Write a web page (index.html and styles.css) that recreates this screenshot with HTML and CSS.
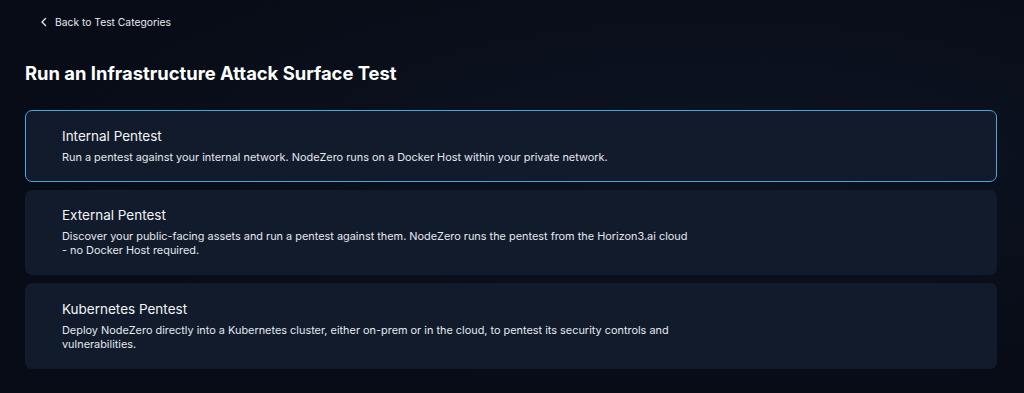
FILE: index.html
```html
<!DOCTYPE html>
<html lang="en">
<head>
    <meta charset="UTF-8">
    <title>Run an Infrastructure Attack Surface Test</title>
    <link rel="stylesheet" href="styles.css">
</head>
<body>
    <div class="page">
        <a href="#" class="back-link">
            <svg width="10" height="10" viewBox="0 0 10 10"><path d="M6.5 1.5 L3 5 L6.5 8.5" fill="none" stroke="#e6e9ef" stroke-width="1.4" stroke-linecap="round" stroke-linejoin="round"/></svg>
            Back to Test Categories
        </a>

        <h1>Run an Infrastructure Attack Surface Test</h1>

        <div class="options">
            <div class="option selected">
                <h3>Internal Pentest</h3>
                <p>Run a pentest against your internal network. NodeZero runs on a Docker Host within your private network.</p>
            </div>
            <div class="option">
                <h3>External Pentest</h3>
                <p>Discover your public-facing assets and run a pentest against them. NodeZero runs the pentest from the Horizon3.ai cloud - no Docker Host required.</p>
            </div>
            <div class="option">
                <h3>Kubernetes Pentest</h3>
                <p>Deploy NodeZero directly into a Kubernetes cluster, either on-prem or in the cloud, to pentest its security controls and vulnerabilities.</p>
            </div>
        </div>
    </div>
</body>
</html>
```

FILE: styles.css
```css
body {
    margin: 0;
    padding: 0;
    background-color: #080c16;
    background-image: radial-gradient(ellipse at 70% 40%, #0c1322 0%, #080c16 70%);
    color: #eef1f6;
    font-family: Inter, 'Noto Sans', sans-serif;
    min-height: 393px;
}
.page {
    padding: 14px 27px 0 25px;
}
.back-link {
    display: flex;
    width: fit-content;
    align-items: center;
    gap: 6px;
    margin-left: 14px;
    color: #e6e9ef;
    text-decoration: none;
    font-size: 10.3px;
    line-height: 16px;
}
h1 {
    margin: 32px 0 26px;
    font-size: 18.4px;
    font-weight: 700;
    line-height: 22px;
    color: #ffffff;
}
.options {
    display: flex;
    flex-direction: column;
    gap: 8px;
}
.option {
    background-color: #121b2b;
    border: 1.5px solid transparent;
    border-radius: 7px;
    padding: 14.5px 36px 17px;
}
.option.selected {
    border-color: #46a6dd;
}
.option h3 {
    margin: 0 0 4px;
    font-size: 13.5px;
    font-weight: 400;
    line-height: 20px;
    color: #f2f4f8;
}
.option p {
    margin: 0;
    max-width: 632px;
    font-size: 10.9px;
    line-height: 14px;
    color: #e3e7ee;
}
```
